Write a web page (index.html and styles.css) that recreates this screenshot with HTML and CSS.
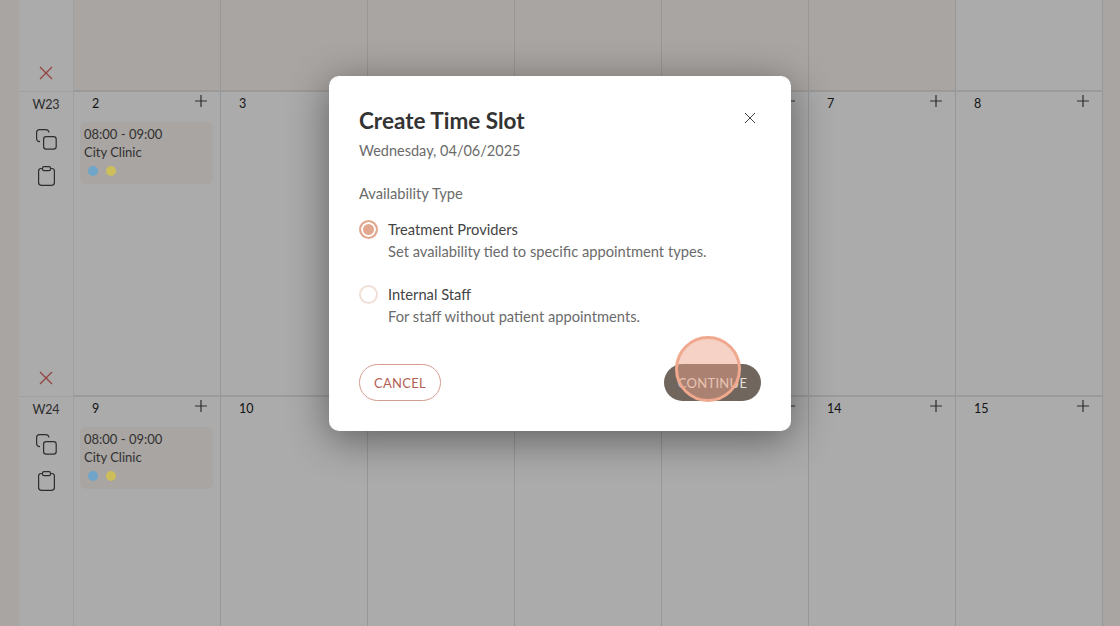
FILE: index.html
```html
<!DOCTYPE html>
<html>
<head>
  <title>Create Time Slot</title>
  <link rel="stylesheet" href="styles.css">
</head>
<body>
  <!-- Icons used by the calendar -->
  <svg class="sprite">
    <symbol id="icon-x" viewBox="0 0 14 14"><path d="M1 1L13 13M13 1L1 13"/></symbol>
    <symbol id="icon-plus" viewBox="0 0 12 12"><path d="M6 0V12M0 6H12"/></symbol>
    <symbol id="icon-copy" viewBox="0 0 21 21"><rect x="7.6" y="7.6" width="12.6" height="12.6" rx="2.6"/><path d="M4 12.6C1.8 12.6 .6 11.2 .6 9.5V3.6C.6 1.8 1.8 .6 3.6 .6H9.5C11.5 .6 12.7 1.6 13 3.5"/></symbol>
    <symbol id="icon-paste" viewBox="0 0 17 20"><path d="M4.5 2.5H3.2C1.6 2.5 .6 3.6 .6 5.2V16.6C.6 18.2 1.6 19.3 3.2 19.3H13.8C15.4 19.3 16.4 18.2 16.4 16.6V5.2C16.4 3.6 15.4 2.5 13.8 2.5H12.5"/><rect x="4.5" y=".6" width="8" height="4" rx="1.4"/></symbol>
  </svg>

  <!-- Calendar behind the dialog -->
  <div class="calendar">
    <div class="week-cell">
      <svg class="icon-x"><use href="#icon-x"/></svg>
    </div>
    <div class="day-cell past"></div>
    <div class="day-cell past"></div>
    <div class="day-cell past"></div>
    <div class="day-cell past"></div>
    <div class="day-cell past"></div>
    <div class="day-cell past"></div>
    <div class="day-cell"></div>

    <div class="week-cell">
      <div class="week-name">W23</div>
      <svg class="icon-copy"><use href="#icon-copy"/></svg>
      <svg class="icon-paste"><use href="#icon-paste"/></svg>
      <svg class="icon-x"><use href="#icon-x"/></svg>
    </div>
    <div class="day-cell">
      <div class="day-head"><span>2</span><svg class="icon-plus"><use href="#icon-plus"/></svg></div>
      <div class="slot">
        <div>08:00 - 09:00</div>
        <div>City Clinic</div>
        <div class="dots"><span class="dot blue"></span><span class="dot yellow"></span></div>
      </div>
    </div>
    <div class="day-cell"><div class="day-head"><span>3</span><svg class="icon-plus"><use href="#icon-plus"/></svg></div></div>
    <div class="day-cell"></div>
    <div class="day-cell"></div>
    <div class="day-cell"><div class="day-head"><span>6</span><svg class="icon-plus"><use href="#icon-plus"/></svg></div></div>
    <div class="day-cell"><div class="day-head"><span>7</span><svg class="icon-plus"><use href="#icon-plus"/></svg></div></div>
    <div class="day-cell"><div class="day-head"><span>8</span><svg class="icon-plus"><use href="#icon-plus"/></svg></div></div>

    <div class="week-cell">
      <div class="week-name">W24</div>
      <svg class="icon-copy"><use href="#icon-copy"/></svg>
      <svg class="icon-paste"><use href="#icon-paste"/></svg>
    </div>
    <div class="day-cell">
      <div class="day-head"><span>9</span><svg class="icon-plus"><use href="#icon-plus"/></svg></div>
      <div class="slot">
        <div>08:00 - 09:00</div>
        <div>City Clinic</div>
        <div class="dots"><span class="dot blue"></span><span class="dot yellow"></span></div>
      </div>
    </div>
    <div class="day-cell"><div class="day-head"><span>10</span><svg class="icon-plus"><use href="#icon-plus"/></svg></div></div>
    <div class="day-cell"><div class="day-head"><span>11</span><svg class="icon-plus"><use href="#icon-plus"/></svg></div></div>
    <div class="day-cell"><div class="day-head"><span>12</span><svg class="icon-plus"><use href="#icon-plus"/></svg></div></div>
    <div class="day-cell"><div class="day-head"><span>13</span><svg class="icon-plus"><use href="#icon-plus"/></svg></div></div>
    <div class="day-cell"><div class="day-head"><span>14</span><svg class="icon-plus"><use href="#icon-plus"/></svg></div></div>
    <div class="day-cell"><div class="day-head"><span>15</span><svg class="icon-plus"><use href="#icon-plus"/></svg></div></div>
  </div>

  <!-- Dialog -->
  <div class="overlay">
    <div class="modal">
      <div class="modal-head">
        <h2>Create Time Slot</h2>
        <svg class="modal-close" viewBox="0 0 12 12"><path d="M1 1L11 11M11 1L1 11"/></svg>
      </div>
      <p class="modal-date">Wednesday, 04/06/2025</p>
      <p class="modal-label">Availability Type</p>

      <div class="option first">
        <span class="radio checked"></span>
        <div>
          <div class="option-name">Treatment Providers</div>
          <div class="option-text">Set availability tied to specific appointment types.</div>
        </div>
      </div>
      <div class="option">
        <span class="radio"></span>
        <div>
          <div class="option-name">Internal Staff</div>
          <div class="option-text">For staff without patient appointments.</div>
        </div>
      </div>

      <div class="modal-actions">
        <button class="btn-cancel">Cancel</button>
        <button class="btn-continue">Continue<span class="click-mark"></span></button>
      </div>
    </div>
  </div>
</body>
</html>
```

FILE: styles.css
```css
body {
  font-family: Lato, "Open Sans", sans-serif;
  margin: 0;
  height: 626px;
  overflow: hidden;
  background-color: #fdf6f2;
}

.sprite {
  display: none;
}

/* Calendar */
.calendar {
  display: grid;
  grid-template-columns: 55px repeat(7, 147px);
  grid-template-rows: 92px 305px 240px;
  margin-left: 19px;
  color: #222;
  font-size: 12.5px;
}

.week-cell {
  display: flex;
  flex-direction: column;
  align-items: center;
  padding: 5px 0 11px;
  background-color: #fff;
  border-right: 1px solid #eee;
  border-bottom: 1px solid #eee;
}

.week-name {
  margin-bottom: 16px;
  font-size: 12.5px;
  letter-spacing: -0.2px;
  line-height: 16px;
  color: #444;
}

.day-cell {
  background-color: #fff;
  border-right: 1px solid #e2e2e2;
  border-bottom: 2px solid #e6e6e6;
  padding: 3px 6px 0;
}

.day-cell.past {
  background-color: #fdf6f2;
}

.day-head {
  display: flex;
  justify-content: space-between;
  align-items: center;
  height: 16px;
  padding: 0 7px 0 12px;
  margin-bottom: 11px;
}

.slot {
  height: 62px;
  margin-right: 1px;
  padding: 3px 4px;
  box-sizing: border-box;
  background-color: #fdf6f2;
  border-radius: 6px;
  font-size: 13px;
  line-height: 18px;
  color: #4a4a4a;
}

.dots {
  display: flex;
  gap: 8px;
  padding: 5px 0 0 4px;
}

/* Dots sit above the overlay so they keep their bright colours */
.dot {
  position: relative;
  z-index: 1;
  width: 10px;
  height: 10px;
  border-radius: 50%;
}

.dot.blue {
  background-color: #6ea5c8;
}

.dot.yellow {
  background-color: #cdbe5c;
}

/* Icons */
svg {
  fill: none;
  stroke: #444;
  stroke-width: 1.2;
}

.icon-x {
  width: 14px;
  height: 14px;
  margin-top: auto;
  stroke: #d9635c;
}

.icon-plus {
  width: 12px;
  height: 12px;
  margin-top: -4px;
}

.icon-copy {
  width: 21px;
  height: 21px;
  margin-bottom: 16px;
}

.icon-paste {
  width: 17px;
  height: 20px;
}

/* Dialog */
.overlay {
  position: absolute;
  top: 0;
  left: 0;
  width: 100%;
  height: 100%;
  display: flex;
  justify-content: center;
  align-items: flex-start;
  background-color: rgba(0, 0, 0, 0.33);
}

.modal {
  width: 462px;
  height: 355px;
  box-sizing: border-box;
  margin-top: 76px;
  padding: 30px;
  background-color: #fff;
  border-radius: 10px;
  box-shadow: 0 8px 40px rgba(0, 0, 0, 0.45);
  color: #444;
  font-size: 14.7px;
}

.modal-head {
  display: flex;
  justify-content: space-between;
  align-items: center;
  height: 28px;
}

.modal-head h2 {
  margin: 0;
  font-size: 22.5px;
  font-weight: 700;
  color: #333;
}

.modal-close {
  width: 12px;
  height: 12px;
  margin: -4px 5px 0 0;
  stroke: #444;
  stroke-width: 1;
}

.modal-date,
.modal-label {
  margin: 0;
  line-height: 20px;
  color: #6b6b6b;
}

.modal-date {
  margin-top: 7px;
  font-size: 14.5px;
}

.modal-label {
  margin-top: 22px;
}

.option {
  display: flex;
  gap: 10px;
  margin-top: 21px;
  line-height: 22px;
}

.option.first {
  margin-top: 15px;
}

.option-text {
  color: #6b6b6b;
}

.radio {
  width: 15px;
  height: 15px;
  margin-top: 2px;
  border: 2px solid #f0e0d8;
  border-radius: 50%;
  flex-shrink: 0;
}

.radio.checked {
  border-color: #e2a78f;
  background-color: #e2a78f;
  box-shadow: inset 0 0 0 2px #fff;
}

.modal-actions {
  display: flex;
  justify-content: space-between;
  margin-top: 37px;
}

.modal-actions button {
  height: 37px;
  padding: 0;
  border-radius: 19px;
  font-family: inherit;
  font-size: 13px;
  letter-spacing: 0.3px;
  text-transform: uppercase;
}

.btn-cancel {
  width: 82px;
  background-color: #fff;
  border: 1px solid #d49c90;
  color: #b25f55;
}

.btn-continue {
  position: relative;
  width: 97px;
  background-color: #70665e;
  border: none;
  color: #e6e0da;
}

/* Click marker over the button */
.click-mark {
  position: absolute;
  left: 11px;
  top: -28px;
  width: 60px;
  height: 60px;
  border: 3px solid #f0a88e;
  border-radius: 50%;
  background-color: rgba(236, 160, 135, 0.48);
}
```
